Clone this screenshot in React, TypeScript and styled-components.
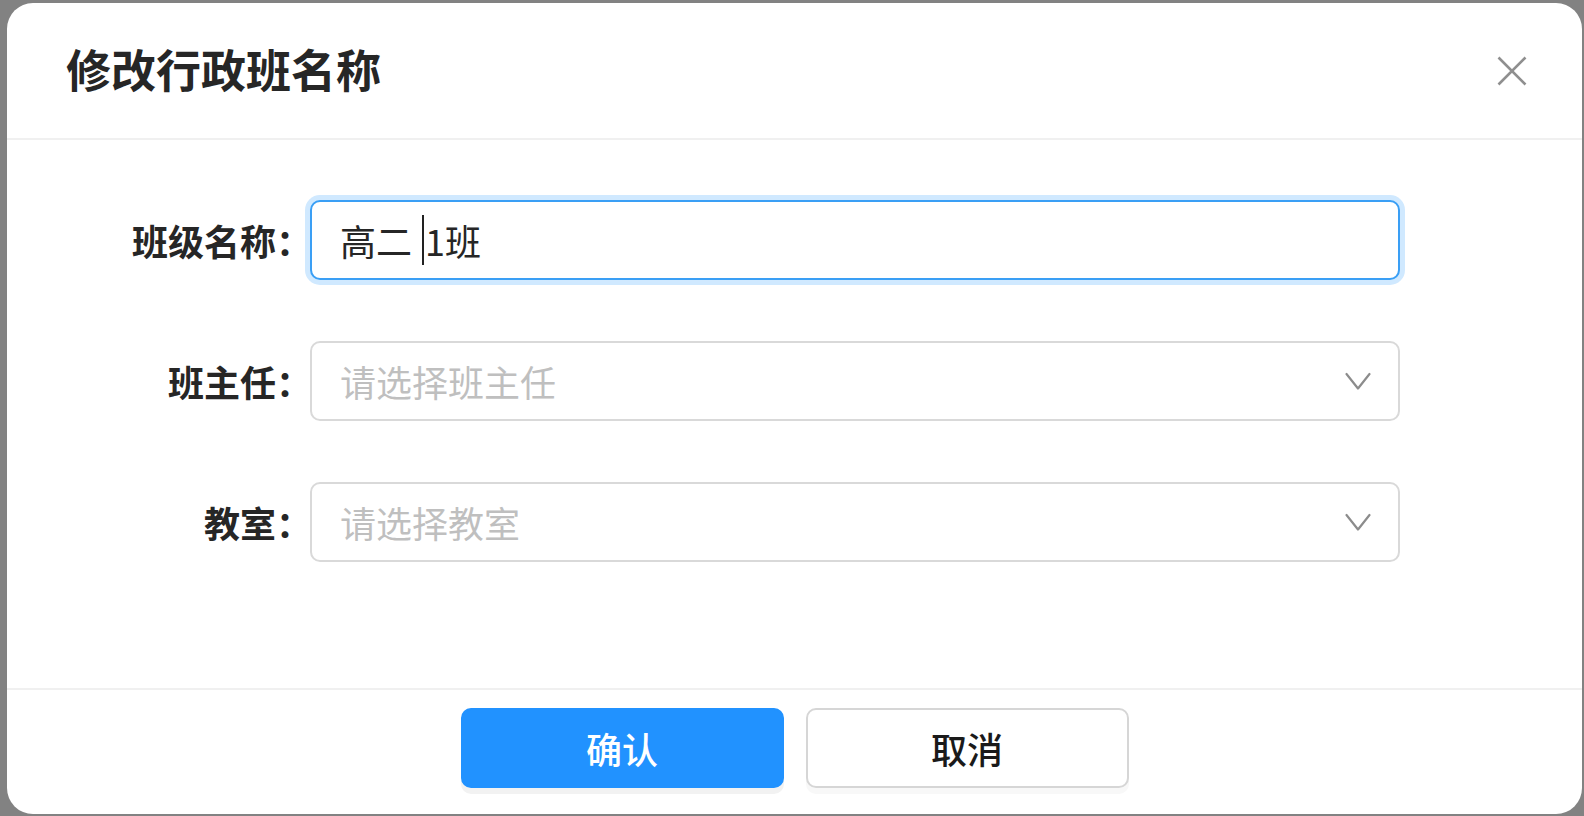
import React from "react";
import styled, { createGlobalStyle } from "styled-components";

const Global = createGlobalStyle`
  html, body { margin: 0; padding: 0; }
  body {
    background: #828282;
    font-family: "Noto Sans CJK SC", "Noto Sans", sans-serif;
    overflow: hidden;
  }
`;

const Backdrop = styled.div`
  width: 1584px;
  height: 816px;
  box-sizing: border-box;
  padding: 3px 2px 2px 7px;
  display: flex;
  background: #828282;
`;

const Modal = styled.div`
  width: 1575px;
  height: 811px;
  background: #ffffff;
  border-radius: 26px;
  overflow: hidden;
  display: flex;
  flex-direction: column;
`;

const Header = styled.div`
  height: 137px;
  flex: none;
  box-sizing: border-box;
  border-bottom: 2px solid #f0f0f0;
  display: flex;
  align-items: center;
  justify-content: space-between;
  padding: 0 55px 0 59px;
`;

const Title = styled.div`
  font-size: 45px;
  font-weight: 700;
  color: #262626;
  line-height: 1;
  margin-bottom: 4px;
`;

const CloseButton = styled.button`
  width: 30px;
  height: 30px;
  padding: 0;
  border: 0;
  background: transparent;
  display: flex;
  align-items: center;
  justify-content: center;
  cursor: pointer;
`;

const Body = styled.div`
  flex: 1;
  padding-top: 60px;
  display: flex;
  flex-direction: column;
  gap: 61px;
`;

const FormRow = styled.div`
  display: grid;
  grid-template-columns: 303px 1090px;
  height: 80px;
  align-items: center;
`;

const Label = styled.label`
  text-align: right;
  margin-right: -2px;
  font-size: 36px;
  font-weight: 700;
  color: #262626;
  white-space: nowrap;
`;

const Field = styled.div<{ $focused?: boolean }>`
  box-sizing: border-box;
  height: 80px;
  border: 2px solid ${(p) => (p.$focused ? "#3a9ff5" : "#d9d9d9")};
  border-radius: 10px;
  box-shadow: ${(p) => (p.$focused ? "0 0 0 5px #d0e9ff" : "none")};
  padding: 0 27px 0 28px;
  display: flex;
  align-items: center;
  justify-content: space-between;
  font-size: 36px;
  background: #fff;
`;

const Value = styled.span`
  color: #262626;
  display: flex;
  align-items: center;
  white-space: pre;
`;

const Caret = styled.span`
  display: inline-block;
  width: 2px;
  height: 50px;
  background: #222;
  margin: 0 1px 0 2px;
`;

const Placeholder = styled.span`
  color: #bfbfbf;
`;

const Footer = styled.div`
  height: 126px;
  flex: none;
  box-sizing: border-box;
  border-top: 2px solid #f0f0f0;
  padding-top: 18px;
  display: flex;
  justify-content: center;
  align-items: flex-start;
  gap: 22px;
`;

const Button = styled.button<{ $primary?: boolean }>`
  width: 323px;
  height: 80px;
  box-sizing: border-box;
  border-radius: 10px;
  border: 2px solid ${(p) => (p.$primary ? "#2192ff" : "#d6d6d6")};
  background: ${(p) => (p.$primary ? "#2192ff" : "#ffffff")};
  color: ${(p) => (p.$primary ? "#ffffff" : "#1a1a1a")};
  font-family: "Noto Sans CJK SC", "Noto Sans", sans-serif;
  font-size: 36px;
  font-weight: 500;
  box-shadow: 0 6px 0 ${(p) => (p.$primary ? "#f2f2f2" : "#f8f8f8")};
  cursor: pointer;
`;

const Chevron = () => (
  <svg width="26" height="19" viewBox="0 0 26 19" fill="none">
    <polyline
      points="1.5,2 13,16.5 24.5,2"
      stroke="#8c8c8c"
      strokeWidth="2.2"
      strokeLinecap="round"
      strokeLinejoin="round"
    />
  </svg>
);

const CloseIcon = () => (
  <svg width="30" height="30" viewBox="0 0 30 30" fill="none">
    <path d="M1.5 1.5 L28.5 28.5 M28.5 1.5 L1.5 28.5" stroke="#8f8f8f" strokeWidth="2.6" />
  </svg>
);

export default function App() {
  return (
    <>
      <Global />
      <Backdrop>
        <Modal>
          <Header>
            <Title>修改行政班名称</Title>
            <CloseButton aria-label="关闭">
              <CloseIcon />
            </CloseButton>
          </Header>
          <Body>
            <FormRow>
              <Label>班级名称：</Label>
              <Field $focused>
                <Value>
                  {"高二 "}
                  <Caret />
                  {"1班"}
                </Value>
              </Field>
            </FormRow>
            <FormRow>
              <Label>班主任：</Label>
              <Field>
                <Placeholder>请选择班主任</Placeholder>
                <Chevron />
              </Field>
            </FormRow>
            <FormRow>
              <Label>教室：</Label>
              <Field>
                <Placeholder>请选择教室</Placeholder>
                <Chevron />
              </Field>
            </FormRow>
          </Body>
          <Footer>
            <Button $primary>确认</Button>
            <Button>取消</Button>
          </Footer>
        </Modal>
      </Backdrop>
    </>
  );
}
